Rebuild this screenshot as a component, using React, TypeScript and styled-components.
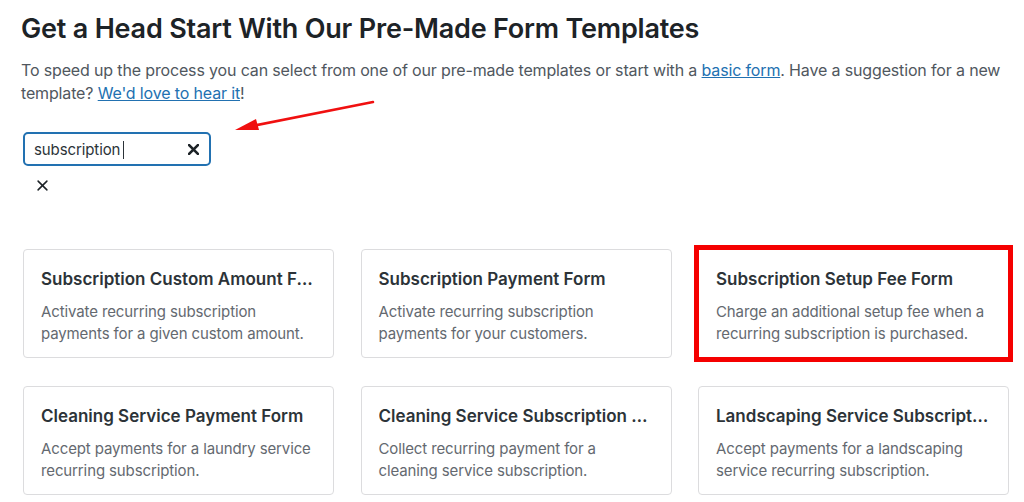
import React from "react";
import styled, { createGlobalStyle } from "styled-components";

const Global = createGlobalStyle`
  html, body { margin: 0; padding: 0; background: #fff; }
  body { font-family: Inter, "Noto Sans", sans-serif; -webkit-font-smoothing: antialiased; }
`;

const Page = styled.div`
  position: relative;
  width: 1024px;
  height: 502px;
  overflow: hidden;
  padding: 13px 23px 0 23px;
  box-sizing: border-box;
`;

const Title = styled.h1`
  margin: 0 0 0 -2px;
  font-size: 27px;
  line-height: 32px;
  font-weight: 600;
  color: #1d2327;
  letter-spacing: -0.2px;
`;

const Intro = styled.p`
  margin: 14px 0 0 -2px;
  font-size: 16px;
  line-height: 23px;
  color: #50575e;
  width: 1000px;
  letter-spacing: -0.15px;
`;

const Link = styled.a`
  color: #2271b1;
  text-decoration: underline;
`;

const SearchBox = styled.div`
  margin-top: 27px;
  width: 188px;
  height: 34px;
  box-sizing: border-box;
  border: 2px solid #2271b1;
  border-radius: 5px;
  display: flex;
  align-items: center;
  padding: 1px 10px 0 9px;
`;

const SearchText = styled.span`
  font-size: 15px;
  color: #2c3338;
  letter-spacing: -0.1px;
`;

const Caret = styled.span`
  display: inline-block;
  width: 1px;
  height: 18px;
  background: #2c3338;
  margin-left: 3px;
`;

const Spacer = styled.span`
  flex: 1;
`;

const IconBtn = styled.span`
  display: flex;
  align-items: center;
  justify-content: center;
`;

const ClearRow = styled.div`
  margin-top: 14px;
  padding-left: 14px;
  height: 12px;
  display: flex;
`;

const Grid = styled.div`
  margin-top: 57px;
  display: grid;
  grid-template-columns: repeat(3, 311px);
  column-gap: 26.5px;
  row-gap: 28px;
`;

const Card = styled.div<{ $highlight?: boolean }>`
  box-sizing: border-box;
  height: 109px;
  border: 1px solid #dcdcde;
  border-radius: 4px;
  padding: 17px 17px 0 17px;
  background: #fff;
  ${(p) =>
    p.$highlight
      ? `outline: 5px solid #f50000; outline-offset: -1px; border-color: #f50000; border-radius: 0;`
      : ""}
`;

const CardTitle = styled.div`
  font-size: 17px;
  line-height: 24px;
  font-weight: 600;
  color: #2c3338;
  white-space: nowrap;
  overflow: hidden;
  text-overflow: ellipsis;
`;

const CardDesc = styled.div`
  margin-top: 10px;
  font-size: 15px;
  line-height: 22px;
  color: #646970;
  letter-spacing: -0.12px;
`;

const Arrow = styled.svg`
  position: absolute;
  left: 0;
  top: 0;
  pointer-events: none;
`;

const XIcon = ({ size, stroke, color }: { size: number; stroke: number; color: string }) => (
  <svg width={size} height={size} viewBox="0 0 10 10">
    <path d="M1 1 L9 9 M9 1 L1 9" stroke={color} strokeWidth={stroke} strokeLinecap="round" />
  </svg>
);

const cards = [
  { t: "Subscription Custom Amount Form", d: "Activate recurring subscription payments for a given custom amount." },
  { t: "Subscription Payment Form", d: "Activate recurring subscription payments for your customers." },
  { t: "Subscription Setup Fee Form", d: "Charge an additional setup fee when a recurring subscription is purchased.", h: true },
  { t: "Cleaning Service Payment Form", d: "Accept payments for a laundry service recurring subscription." },
  { t: "Cleaning Service Subscription Form", d: "Collect recurring payment for a cleaning service subscription." },
  { t: "Landscaping Service Subscription Form", d: "Accept payments for a landscaping service recurring subscription." },
];

export default function App() {
  return (
    <>
      <Global />
      <Page>
        <Title>Get a Head Start With Our Pre-Made Form Templates</Title>
        <Intro>
          To speed up the process you can select from one of our pre-made templates or start with a{" "}
          <Link href="#">basic form</Link>. Have a suggestion for a new template?{" "}
          <Link href="#">We'd love to hear it</Link>!
        </Intro>
        <SearchBox>
          <SearchText>subscription</SearchText>
          <Caret />
          <Spacer />
          <IconBtn>
            <XIcon size={11} stroke={2.4} color="#1d2327" />
          </IconBtn>
        </SearchBox>
        <ClearRow>
          <XIcon size={11} stroke={1.4} color="#1d2327" />
        </ClearRow>
        <Grid>
          {cards.map((c) => (
            <Card key={c.t} $highlight={c.h}>
              <CardTitle>{c.t}</CardTitle>
              <CardDesc>{c.d}</CardDesc>
            </Card>
          ))}
        </Grid>
        <Arrow width="1024" height="502">
          <line x1="373" y1="102" x2="252" y2="126" stroke="#f01010" strokeWidth="2.5" strokeLinecap="round" />
          <polygon points="235,130 256,119 259,130" fill="#f01010" />
        </Arrow>
      </Page>
    </>
  );
}
